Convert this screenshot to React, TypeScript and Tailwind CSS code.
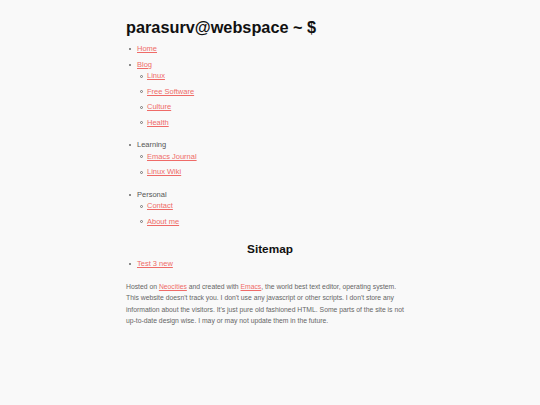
const link = "text-[#ef6b68] underline decoration-[0.7px] underline-offset-[1px]";

type NavItem = { label: string; href?: string; children?: { label: string; href: string }[] };

const nav: NavItem[] = [
  { label: "Home", href: "#" },
  {
    label: "Blog",
    href: "#",
    children: [
      { label: "Linux", href: "#" },
      { label: "Free Software", href: "#" },
      { label: "Culture", href: "#" },
      { label: "Health", href: "#" },
    ],
  },
  {
    label: "Learning",
    children: [
      { label: "Emacs Journal", href: "#" },
      { label: "Linux Wiki", href: "#" },
    ],
  },
  {
    label: "Personal",
    children: [
      { label: "Contact", href: "#" },
      { label: "About me", href: "#" },
    ],
  },
];

function Disc() {
  return <span className="ml-[3px] mr-[6px] mt-[5px] h-[2px] w-[2px] shrink-0 rounded-full bg-[#666]" />;
}

function Circle() {
  return (
    <span className="ml-[2.5px] mr-[4.5px] mt-[4.5px] h-[3px] w-[3px] shrink-0 rounded-full border-[0.6px] border-[#777]" />
  );
}

function Label({ text, href }: { text: string; href?: string }) {
  return href ? (
    <a href={href} className={link}>
      {text}
    </a>
  ) : (
    <span>{text}</span>
  );
}

export default function App() {
  return (
    <div className="min-h-screen bg-[#f9f9f9] font-['Liberation_Sans',Arial,sans-serif] text-[#555]">
      <div className="mx-auto w-[288px] pt-[17px]">
        <h1 className="text-[16.3px] font-bold leading-[20px] text-[#111]">parasurv@webspace ~ $</h1>

        <ul className="mt-[6px] flex flex-col gap-[4px] text-[7.5px] leading-[11.5px]">
          {nav.map((item) => (
            <li key={item.label} className="flex items-start">
              <Disc />
              <div className="flex-1">
                <Label text={item.label} href={item.href} />
                {item.children && (
                  <ul className="flex flex-col gap-[4px] pb-[7px]">
                    {item.children.map((c) => (
                      <li key={c.label} className="flex items-start">
                        <Circle />
                        <Label text={c.label} href={c.href} />
                      </li>
                    ))}
                  </ul>
                )}
              </div>
            </li>
          ))}
        </ul>

        <h2 className="mt-[8px] text-center text-[11.8px] font-bold leading-[14px] text-[#111]">Sitemap</h2>

        <ul className="mt-[2px] text-[7.5px] leading-[11.5px]">
          <li className="flex items-start">
            <Disc />
            <Label text="Test 3 new" href="#" />
          </li>
        </ul>

        <p className="mt-[11.5px] w-[284px] text-[6.8px] leading-[11.35px] text-[#666]">
          Hosted on{" "}
          <a href="#" className={link}>
            Neocities
          </a>{" "}
          and created with{" "}
          <a href="#" className={link}>
            Emacs
          </a>
          , the world best text editor, operating system. This website doesn't track you. I don't use any javascript
          or other scripts. I don't store any information about the visitors. It's just pure old fashioned HTML. Some
          parts of the site is not up-to-date design wise. I may or may not update them in the future.
        </p>
      </div>
    </div>
  );
}
